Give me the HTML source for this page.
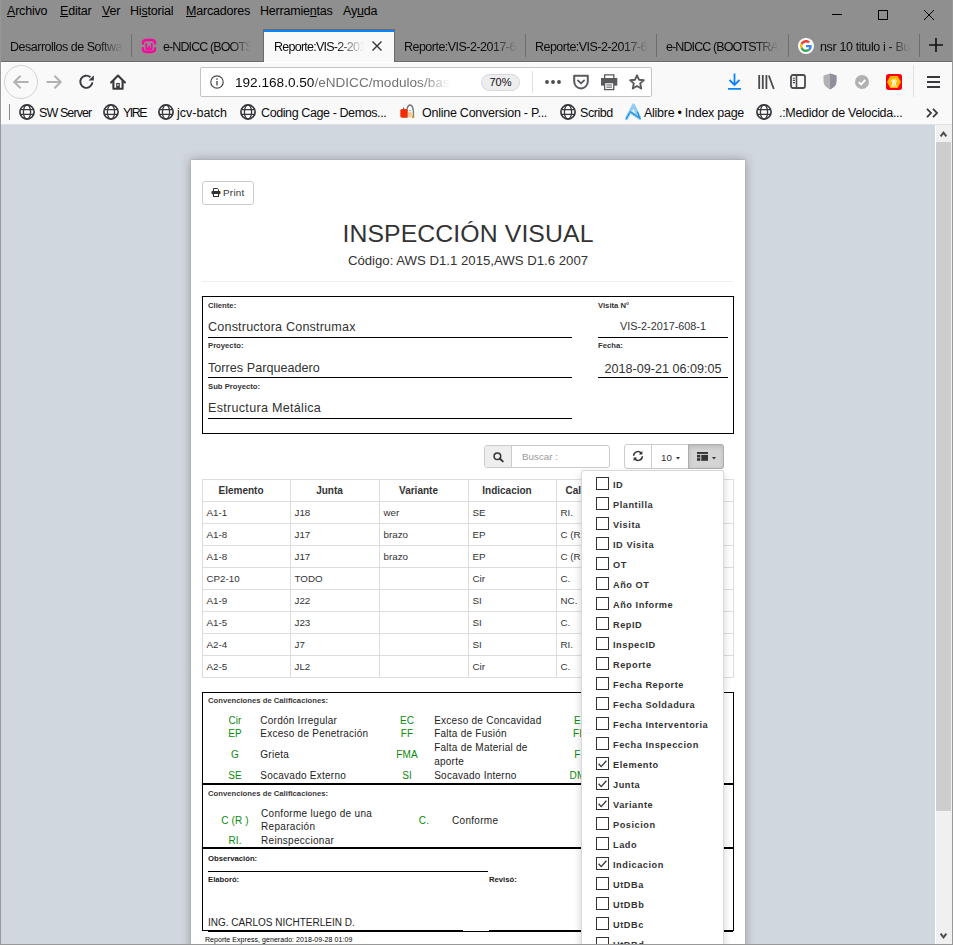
<!DOCTYPE html>
<html><head><meta charset="utf-8">
<style>
*{margin:0;padding:0;box-sizing:border-box}
html,body{width:953px;height:945px;overflow:hidden;background:#8f8f8f;font-family:"Liberation Sans",sans-serif}
.a{position:absolute;white-space:nowrap}
.mb{position:absolute;top:4px;font-size:12.5px;letter-spacing:-0.2px;color:#000;white-space:nowrap}
.mb u{text-decoration:underline;text-underline-offset:1px}
.tt{position:absolute;top:39.5px;font-size:12.5px;letter-spacing:-0.6px;color:#0c0c0d;white-space:nowrap;overflow:hidden;-webkit-mask-image:linear-gradient(to right,#000 78%,transparent 100%)}
.sep{position:absolute;top:34px;width:1px;height:23px;background:#6e6e6e}
.bm{position:absolute;top:106px;font-size:12.5px;color:#0c0c0d;white-space:nowrap}
.gl{position:absolute;top:104px;width:16px;height:16px}
svg{position:absolute;overflow:visible}
</style></head><body>
<!-- window border -->
<div class="a" style="left:0;top:0;width:953px;height:945px;background:#8f8f8f"></div>
<!-- menubar -->
<div class="mb" style="left:7px"><u>A</u>rchivo</div>
<div class="mb" style="left:60px"><u>E</u>ditar</div>
<div class="mb" style="left:102px"><u>V</u>er</div>
<div class="mb" style="left:130px">Hi<u>s</u>torial</div>
<div class="mb" style="left:186px"><u>M</u>arcadores</div>
<div class="mb" style="left:260px">Herramie<u>n</u>tas</div>
<div class="mb" style="left:343px">Ay<u>u</u>da</div>
<!-- window controls -->
<div class="a" style="left:832px;top:14px;width:10px;height:1px;background:#000"></div>
<div class="a" style="left:878px;top:10px;width:10px;height:10px;border:1px solid #000"></div>
<svg style="left:924px;top:10px" width="10" height="10"><path d="M0 0L10 10M10 0L0 10" stroke="#000" stroke-width="1"/></svg>
<!-- tabs -->
<div class="a" style="left:1px;top:61px;width:951px;height:1px;background:#6a6a6a"></div>
<div class="tt" style="left:10px;width:113px;letter-spacing:-0.49px">Desarrollos de Software</div>
<div class="sep" style="left:131px"></div>
<svg style="left:141px;top:38px" width="16" height="16" viewBox="0 0 16 16"><path d="M1.9 6.6V5.5Q1.9 2 5.4 2H10.6Q14.1 2 14.1 5.5V6.6M1.9 9.2V10.5Q1.9 14 5.4 14H10.6Q14.1 14 14.1 10.5V9.2" fill="none" stroke="#f7099c" stroke-width="2.3"/><path d="M5.3 5.2V9.6Q5.3 11.5 6.8 11.5Q8 11.5 8 9.8V8.3M8 9.8Q8 11.5 9.2 11.5Q10.7 11.5 10.7 9.6V5.2" fill="none" stroke="#f7099c" stroke-width="1.9"/></svg>
<div class="tt" style="left:163px;width:88px;letter-spacing:-0.89px">e-NDICC (BOOTSTRAP)</div>
<!-- active tab -->
<div class="a" style="left:263px;top:29px;width:132px;height:33px;background:#6a6a6a"></div>
<div class="a" style="left:264px;top:30px;width:130px;height:32px;background:#f9f9fa"></div>
<div class="a" style="left:264px;top:30px;width:130px;height:2px;background:#0a84ff"></div>
<div class="tt" style="left:274px;width:90px;letter-spacing:-0.75px;-webkit-mask-image:linear-gradient(to right,#000 70%,transparent 100%)">Reporte:VIS-2-2017-608-1</div>
<svg style="left:372px;top:41px" width="10" height="10"><path d="M0.5 0.5L9.5 9.5M9.5 0.5L0.5 9.5" stroke="#333" stroke-width="1.4"/></svg>
<div class="tt" style="left:404px;width:113px;letter-spacing:-0.52px">Reporte:VIS-2-2017-608-1</div>
<div class="sep" style="left:525px"></div>
<div class="tt" style="left:535px;width:113px;letter-spacing:-0.52px">Reporte:VIS-2-2017-608-1</div>
<div class="sep" style="left:656px"></div>
<div class="tt" style="left:666px;width:113px;letter-spacing:-0.89px">e-NDICC (BOOTSTRAP)</div>
<div class="sep" style="left:788px"></div>
<svg style="left:798px;top:38px" width="16" height="16" viewBox="0 0 16 16"><circle cx="8" cy="8" r="8" fill="#fff"/><g transform="translate(2,2) scale(0.25)"><path fill="#EA4335" d="M24 9.5c3.54 0 6.71 1.22 9.21 3.6l6.85-6.85C35.9 2.38 30.47 0 24 0 14.62 0 6.51 5.38 2.56 13.22l7.98 6.19C12.43 13.72 17.74 9.5 24 9.5z"/><path fill="#4285F4" d="M46.98 24.55c0-1.570-.15-3.09-.38-4.55H24v9.02h12.94c-.58 2.96-2.26 5.48-4.78 7.18l7.730 6c4.51-4.18 7.09-10.36 7.09-17.65z"/><path fill="#FBBC05" d="M10.53 28.59c-.48-1.45-.76-2.99-.76-4.59s.27-3.14.76-4.59l-7.98-6.19C.92 16.46 0 20.12 0 24c0 3.88.92 7.54 2.56 10.78l7.97-6.19z"/><path fill="#34A853" d="M24 48c6.48 0 11.93-2.13 15.89-5.81l-7.73-6c-2.15 1.45-4.92 2.3-8.16 2.3-6.26 0-11.57-4.22-13.47-9.91l-7.98 6.19C6.51 42.62 14.62 48 24 48z"/></g></svg>
<div class="tt" style="left:820px;width:90px;letter-spacing:-0.36px">nsr 10 titulo i - Buscar con Google</div>
<div class="sep" style="left:919px"></div>
<svg style="left:929px;top:38px" width="14" height="14"><path d="M7 0V14M0 7H14" stroke="#111" stroke-width="1.6"/></svg>
<!-- toolbar -->
<div class="a" style="left:1px;top:62px;width:951px;height:63px;background:#f9f9fa"></div>
<div class="a" style="left:1px;top:124px;width:951px;height:1px;background:#e1e1e2"></div>
<div class="a" style="left:1px;top:62px;width:951px;height:1px;background:#fff"></div>
<div class="a" style="left:1px;top:62px;width:1px;height:62px;background:#fff"></div>
<!-- nav buttons -->
<div class="a" style="left:4px;top:65px;width:34px;height:34px;border-radius:50%;border:1px solid #d3d3d5;background:#f9f9fa"></div>
<svg style="left:13px;top:75px" width="16" height="14" viewBox="0 0 16 14"><path d="M1.2 7H15.5M7.6 0.7L1.3 7L7.6 13.3" fill="none" stroke="#b1b1b3" stroke-width="2"/></svg>
<svg style="left:46px;top:75px" width="16" height="14" viewBox="0 0 16 14"><path d="M0.5 7H14.8M8.4 0.7L14.7 7L8.4 13.3" fill="none" stroke="#b1b1b3" stroke-width="2"/></svg>
<svg style="left:79px;top:74px" width="16" height="15" viewBox="0 0 16 15"><path d="M13.4 8.3A6.1 6.1 0 1 1 11.4 3.2" fill="none" stroke="#38383d" stroke-width="1.9"/><path d="M14.8 1.2V6.4H9.6Z" fill="#38383d"/></svg>
<svg style="left:110px;top:74px" width="16" height="16" viewBox="0 0 16 16"><path d="M1.1 8.4L8 1.6L14.9 8.4" fill="none" stroke="#38383d" stroke-width="2.1" stroke-linecap="round" stroke-linejoin="round"/><path d="M3.4 6.8V14.8H12.6V6.8" fill="none" stroke="#38383d" stroke-width="2.1" stroke-linejoin="round"/><rect x="6.2" y="9" width="3.6" height="6" fill="#38383d"/><rect x="7.3" y="10.2" width="1.4" height="1.6" fill="#f9f9fa"/></svg>
<!-- url bar -->
<div class="a" style="left:200px;top:67px;width:452px;height:30px;border:1px solid #c4c4c6;border-radius:2px;background:#fff"></div>
<svg style="left:210px;top:75px" width="14" height="14" viewBox="0 0 14 14"><circle cx="7" cy="7" r="6.2" fill="none" stroke="#4a4a4f" stroke-width="1.2"/><rect x="6.3" y="6" width="1.4" height="4.5" fill="#4a4a4f"/><rect x="6.3" y="3.3" width="1.4" height="1.5" fill="#4a4a4f"/></svg>
<div class="a" style="left:235px;top:75px;font-size:13.6px;color:#0c0c0d;width:216px;overflow:hidden;-webkit-mask-image:linear-gradient(to right,#000 86%,transparent 100%)">192.168.0.50<span style="color:#737373">/eNDICC/modulos/basicos/reporte</span></div>
<div class="a" style="left:481px;top:74px;width:39px;height:17px;border:1px solid #d7d7db;border-radius:9px;background:#ededf0;font-size:11px;color:#0c0c0d;text-align:center;line-height:15px">70%</div>
<div class="a" style="left:532px;top:71px;width:1px;height:22px;background:#e1e1e2"></div>
<svg style="left:545px;top:79px" width="16" height="6"><circle cx="2" cy="3" r="1.9" fill="#4a4a4f"/><circle cx="8" cy="3" r="1.9" fill="#4a4a4f"/><circle cx="14" cy="3" r="1.9" fill="#4a4a4f"/></svg>
<svg style="left:573px;top:74px" width="16" height="16" viewBox="0 0 16 16"><path d="M1.2 1.8H14.8V7.6A6.8 6.8 0 0 1 1.2 7.6Z" fill="none" stroke="#5a5a5e" stroke-width="2" stroke-linejoin="round"/><path d="M4.9 6.4L8 9.4L11.1 6.4" fill="none" stroke="#5a5a5e" stroke-width="1.9" stroke-linecap="round" stroke-linejoin="round"/></svg>
<svg style="left:601px;top:74px" width="17" height="16" viewBox="0 0 17 16"><path d="M3.6 4.5V0.8H12.8V4.5" fill="none" stroke="#5a5a5e" stroke-width="1.3"/><rect x="0" y="4" width="16.3" height="7.6" fill="#5a5a5e"/><rect x="3.6" y="8.6" width="9.2" height="7" fill="#fff" stroke="#5a5a5e" stroke-width="1.3"/><path d="M5.4 11H11M5.4 13.2H11" stroke="#5a5a5e" stroke-width="1"/></svg>
<svg style="left:629px;top:74px" width="16" height="16" viewBox="0 0 16 16"><path d="M8 1.3L10 5.7L14.8 6.2L11.2 9.4L12.2 14.5L8 12L3.8 14.5L4.8 9.4L1.2 6.2L6 5.7Z" fill="none" stroke="#5a5a5e" stroke-width="1.9" stroke-linejoin="round"/></svg>
<!-- right toolbar icons -->
<svg style="left:728px;top:73px" width="13" height="17" viewBox="0 0 13 17"><path d="M6.5 0.5V12M1.5 7L6.5 12L11.5 7M0 15.8H13" fill="none" stroke="#0a84ff" stroke-width="1.8"/></svg>
<svg style="left:758px;top:74px" width="17" height="16" viewBox="0 0 17 16"><path d="M1.2 1V15M4.8 1V15M8.4 1V15M10.8 1.5L15.8 15" fill="none" stroke="#4a4a4f" stroke-width="1.8"/></svg>
<svg style="left:790px;top:74px" width="16" height="15" viewBox="0 0 16 15"><rect x="1" y="1" width="14" height="13" rx="2" fill="none" stroke="#4a4a4f" stroke-width="1.8"/><path d="M6.5 1.5V13.5" stroke="#4a4a4f" stroke-width="1.6"/><path d="M2.8 4.2H5M2.8 6.4H5M2.8 8.6H5" stroke="#4a4a4f" stroke-width="1.1"/></svg>
<svg style="left:823px;top:73px" width="14" height="17" viewBox="0 0 14 17"><path d="M7 0.5L13.5 2.5V8Q13.5 13.5 7 16.5Q0.5 13.5 0.5 8V2.5Z" fill="#b1b1b3"/><path d="M7 0.5L13.5 2.5V8Q13.5 13.5 7 16.5Z" fill="#8f8f9d"/></svg>
<svg style="left:855px;top:75px" width="14" height="14" viewBox="0 0 14 14"><circle cx="7" cy="7" r="7" fill="#b1b1b3"/><path d="M3.8 7.2L6 9.4L10.3 5" fill="none" stroke="#fff" stroke-width="1.8"/></svg>
<svg style="left:886px;top:74px" width="16" height="16" viewBox="0 0 16 16"><rect x="0" y="0" width="16" height="16" rx="2.5" fill="#ff0012"/><path d="M4.3 2H11.7L15 8L11.7 14H4.3L1 8Z" fill="#ffb800"/><path d="M5.8 13L7.2 6.8Q8 5 8.8 6.8L10.2 13M8 6.5V13M5 7.8L6.6 5.5M11 7.8L9.4 5.5" fill="none" stroke="#fff6d8" stroke-width="1.1"/></svg>
<div class="a" style="left:913px;top:65px;width:1px;height:32px;background:#e1e1e2"></div>
<svg style="left:927px;top:76px" width="13" height="12"><path d="M0 1H13M0 6H13M0 11H13" stroke="#38383d" stroke-width="1.8"/></svg>
<!-- bookmarks bar -->
<div class="a" style="left:9px;top:104px;width:1px;height:16px;background:#8a8a8e"></div>
<svg width="0" height="0"><defs><g id="globe"><circle cx="8" cy="8" r="7.1" fill="none" stroke="#38383d" stroke-width="1.7"/><ellipse cx="8" cy="8" rx="3.6" ry="7.1" fill="none" stroke="#38383d" stroke-width="1.3"/><path d="M1.3 5.6H14.7M1.3 10.4H14.7" stroke="#38383d" stroke-width="1.4"/></g></defs></svg>
<svg style="left:19px;top:104px" width="16" height="16"><use href="#globe"/></svg>
<div class="bm" style="left:39px;letter-spacing:-0.9px">SW Server</div>
<svg style="left:103px;top:104px" width="16" height="16"><use href="#globe"/></svg>
<div class="bm" style="left:123px;letter-spacing:-1.5px">YIRE</div>
<svg style="left:158px;top:104px" width="16" height="16"><use href="#globe"/></svg>
<div class="bm" style="left:177px">jcv-batch</div>
<svg style="left:240px;top:104px" width="16" height="16"><use href="#globe"/></svg>
<div class="bm" style="left:261px;letter-spacing:-0.4px">Coding Cage - Demos...</div>
<svg style="left:400px;top:104px" width="16" height="16" viewBox="0 0 16 16"><rect width="16" height="16" fill="#fff"/><path d="M6.8 14Q6 1.2 10 1Q14 1.2 13.4 13" fill="none" stroke="#7a7a7a" stroke-width="1.5"/><ellipse cx="9.8" cy="10.5" rx="2.2" ry="3" fill="#fcc690"/><path d="M9 6.5H11" stroke="#9c9" stroke-width="1"/><path d="M12.3 11.5L14.8 13.8L12 14.2Z" fill="#d49a00"/><path d="M0.3 6.5Q0.3 5 2 5H5.8Q7.6 5 7.6 6.5V12Q7.6 13.8 5.8 13.8H2Q0.3 13.8 0.3 12Z" fill="#f52a00"/><path d="M3.6 5V3.5" stroke="#2b5a2b" stroke-width="1"/></svg>
<div class="bm" style="left:422px;letter-spacing:-0.25px">Online Conversion - P...</div>
<svg style="left:560px;top:104px" width="16" height="16"><use href="#globe"/></svg>
<div class="bm" style="left:580px;letter-spacing:-0.45px">Scribd</div>
<svg style="left:625px;top:104px" width="16" height="16" viewBox="0 0 16 16"><path d="M8.5 1.2L1.5 14.6M8.5 1.2L14.8 14.2M5.2 7.8L14.8 14.2" fill="none" stroke="#8fcdf5" stroke-width="3.2" stroke-linecap="round" stroke-linejoin="round"/><path d="M1.5 14.6L4.5 9M5.2 7.8L14.8 14.2L12.5 8" fill="none" stroke="#1a8ad8" stroke-width="1.1" stroke-linecap="round"/></svg>
<div class="bm" style="left:644px;letter-spacing:-0.27px">Alibre • Index page</div>
<svg style="left:756px;top:104px" width="16" height="16"><use href="#globe"/></svg>
<div class="bm" style="left:779px;letter-spacing:-0.3px">.:Medidor de Velocida...</div>
<svg style="left:926px;top:108px" width="13" height="10" viewBox="0 0 13 10"><path d="M1 0.8L5 5L1 9.2M7 0.8L11 5L7 9.2" fill="none" stroke="#38383d" stroke-width="1.8"/></svg>
<div class="a" style="left:0;top:0;width:953px;height:945px;clip-path:inset(125px 18px 1px 1px)">
<div class="a" style="left:1px;top:125px;width:934px;height:819px;background:#d1d7de;"></div>
<div class="a" style="left:191px;top:160px;width:554px;height:800px;background:#fff;box-shadow:0 0 1.5px rgba(0,0,0,.16),0 0 9px 1px rgba(40,50,50,.3)"></div>
<div class="a" style="left:202px;top:181px;width:52px;height:24px;border:1px solid #ccc;border-radius:3px;background:#fff"></div>
<svg style="left:211px;top:188px" width="10" height="9" viewBox="0 0 10 9"><path d="M2.5 3V0.5H6.5L7.5 1.5V3" fill="none" stroke="#333" stroke-width="1"/><rect x="0.5" y="3" width="9" height="3.2" rx="0.8" fill="#333"/><rect x="2.5" y="5.5" width="5" height="3" fill="#fff" stroke="#333" stroke-width="1"/></svg>
<div class="a" style="left:223px;top:187.80px;font-size:9.8px;line-height:9.8px;color:#333;letter-spacing:0.3px;">Print</div>
<div class="a" style="left:191px;top:221.71px;font-size:24.8px;line-height:24.8px;color:#333;letter-spacing:0.1px;width:554px;text-align:center;">INSPECCIÓN VISUAL</div>
<div class="a" style="left:191px;top:254.13px;font-size:13.2px;line-height:13.2px;color:#333;width:554px;text-align:center;">Código: AWS D1.1 2015,AWS D1.6 2007</div>
<div class="a" style="left:202px;top:281px;width:531px;height:1px;background:#eee;"></div>
<div class="a" style="left:202px;top:296px;width:532px;height:138px;border:1.4px solid #000"></div>
<div class="a" style="left:208px;top:301.78px;font-size:7.7px;line-height:7.7px;color:#333;font-weight:700;">Cliente:</div>
<div class="a" style="left:208px;top:321.33px;font-size:12.6px;line-height:12.6px;color:#333;letter-spacing:0.18px;">Constructora Construmax</div>
<div class="a" style="left:208px;top:337px;width:364px;height:1.4px;background:#000;"></div>
<div class="a" style="left:208px;top:342.08px;font-size:7.7px;line-height:7.7px;color:#333;font-weight:700;">Proyecto:</div>
<div class="a" style="left:208px;top:362.13px;font-size:12.6px;line-height:12.6px;color:#333;letter-spacing:0.03px;">Torres Parqueadero</div>
<div class="a" style="left:208px;top:377px;width:364px;height:1.4px;background:#000;"></div>
<div class="a" style="left:208px;top:382.58px;font-size:7.7px;line-height:7.7px;color:#333;font-weight:700;">Sub Proyecto:</div>
<div class="a" style="left:208px;top:402.43px;font-size:12.6px;line-height:12.6px;color:#333;letter-spacing:0.28px;">Estructura Metálica</div>
<div class="a" style="left:208px;top:418px;width:364px;height:1.4px;background:#000;"></div>
<div class="a" style="left:598px;top:301.88px;font-size:7.7px;line-height:7.7px;color:#333;font-weight:700;">Visita N°</div>
<div class="a" style="left:598px;top:321.46px;font-size:10.8px;line-height:10.8px;color:#333;width:130px;text-align:center;">VIS-2-2017-608-1</div>
<div class="a" style="left:598px;top:337px;width:130px;height:1.4px;background:#000;"></div>
<div class="a" style="left:598px;top:341.98px;font-size:7.7px;line-height:7.7px;color:#333;font-weight:700;">Fecha:</div>
<div class="a" style="left:598px;top:362.93px;font-size:12.6px;line-height:12.6px;color:#333;width:130px;text-align:center;">2018-09-21 06:09:05</div>
<div class="a" style="left:598px;top:377px;width:130px;height:1.4px;background:#000;"></div>
<div class="a" style="left:484px;top:445px;width:126px;height:23px;border:1px solid #ccc;border-radius:3px;background:#fff"></div>
<div class="a" style="left:485px;top:446px;width:27px;height:21px;background:#eee;border-right:1px solid #ccc;border-radius:2px 0 0 2px"></div>
<svg style="left:493px;top:452px" width="11" height="10" viewBox="0 0 11 10"><circle cx="4.4" cy="4.2" r="3.3" fill="none" stroke="#333" stroke-width="1.5"/><path d="M6.7 6.5L9.8 9.4" stroke="#333" stroke-width="1.9" stroke-linecap="round"/></svg>
<div class="a" style="left:522px;top:452.30px;font-size:9.8px;line-height:9.8px;color:#999;">Buscar :</div>
<div class="a" style="left:624px;top:444px;width:100px;height:25px;border:1px solid #ccc;border-radius:3px;background:#fff"></div>
<div class="a" style="left:688px;top:444px;width:36px;height:25px;border:1px solid #adadad;border-radius:0 3px 3px 0;background:#d4d4d4;box-shadow:inset 0 2px 4px rgba(0,0,0,.125)"></div>
<div class="a" style="left:651px;top:445px;width:1px;height:23px;background:#ccc;"></div>
<svg style="left:632px;top:450px" width="12" height="12" viewBox="0 0 12 12"><path d="M1.6 5.8A4.3 4.3 0 0 1 9.2 3.2" fill="none" stroke="#333" stroke-width="1.5"/><path d="M10.4 1V4.6H6.8Z" fill="#333"/><path d="M10.4 6.2A4.3 4.3 0 0 1 2.8 8.8" fill="none" stroke="#333" stroke-width="1.5"/><path d="M1.6 11V7.4H5.2Z" fill="#333"/></svg>
<div class="a" style="left:661px;top:452.80px;font-size:9.8px;line-height:9.8px;color:#333;">10</div>
<svg style="left:676px;top:457px" width="4" height="3"><path d="M0 0H4L2 2.5Z" fill="#333"/></svg>
<svg style="left:697px;top:452px" width="12" height="10" viewBox="0 0 12 10"><rect x="0" y="0" width="11" height="1.9" fill="#333"/><rect x="0" y="2.9" width="3.3" height="2.6" fill="#333"/><rect x="0" y="6.2" width="3.3" height="2.6" fill="#333"/><rect x="4.3" y="2.9" width="6.7" height="5.9" fill="#333"/></svg>
<svg style="left:712px;top:457px" width="4" height="3"><path d="M0 0H4L2 2.5Z" fill="#333"/></svg>
<div class="a" style="left:202px;top:479px;width:532px;height:199px;background:#fff;border:1px solid #ddd"></div>
<div class="a" style="left:290px;top:479px;width:1px;height:199px;background:#ddd;"></div>
<div class="a" style="left:379px;top:479px;width:1px;height:199px;background:#ddd;"></div>
<div class="a" style="left:468px;top:479px;width:1px;height:199px;background:#ddd;"></div>
<div class="a" style="left:556px;top:479px;width:1px;height:199px;background:#ddd;"></div>
<div class="a" style="left:645px;top:479px;width:1px;height:199px;background:#ddd;"></div>
<div class="a" style="left:202px;top:501px;width:532px;height:1px;background:#ddd;"></div>
<div class="a" style="left:202px;top:523px;width:532px;height:1px;background:#ddd;"></div>
<div class="a" style="left:202px;top:545px;width:532px;height:1px;background:#ddd;"></div>
<div class="a" style="left:202px;top:567px;width:532px;height:1px;background:#ddd;"></div>
<div class="a" style="left:202px;top:589px;width:532px;height:1px;background:#ddd;"></div>
<div class="a" style="left:202px;top:611px;width:532px;height:1px;background:#ddd;"></div>
<div class="a" style="left:202px;top:633px;width:532px;height:1px;background:#ddd;"></div>
<div class="a" style="left:202px;top:655px;width:532px;height:1px;background:#ddd;"></div>
<div class="a" style="left:197px;top:486.14px;font-size:10px;line-height:10px;color:#333;font-weight:700;width:88px;text-align:center;">Elemento</div>
<div class="a" style="left:285px;top:486.14px;font-size:10px;line-height:10px;color:#333;font-weight:700;width:89px;text-align:center;">Junta</div>
<div class="a" style="left:374px;top:486.14px;font-size:10px;line-height:10px;color:#333;font-weight:700;width:89px;text-align:center;">Variante</div>
<div class="a" style="left:463px;top:486.14px;font-size:10px;line-height:10px;color:#333;font-weight:700;width:88px;text-align:center;">Indicacion</div>
<div class="a" style="left:549px;top:486.14px;font-size:10px;line-height:10px;color:#333;font-weight:700;width:89px;text-align:center;">Calificacion</div>
<div class="a" style="left:640px;top:486.14px;font-size:10px;line-height:10px;color:#333;font-weight:700;width:88px;text-align:center;">Descripcion</div>
<div class="a" style="left:206.5px;top:508.30px;font-size:9.8px;line-height:9.8px;color:#333;">A1-1</div>
<div class="a" style="left:294.5px;top:508.30px;font-size:9.8px;line-height:9.8px;color:#333;">J18</div>
<div class="a" style="left:383.5px;top:508.30px;font-size:9.8px;line-height:9.8px;color:#333;">wer</div>
<div class="a" style="left:472.5px;top:508.30px;font-size:9.8px;line-height:9.8px;color:#333;">SE</div>
<div class="a" style="left:560.5px;top:508.30px;font-size:9.8px;line-height:9.8px;color:#333;">RI.</div>
<div class="a" style="left:206.5px;top:530.30px;font-size:9.8px;line-height:9.8px;color:#333;">A1-8</div>
<div class="a" style="left:294.5px;top:530.30px;font-size:9.8px;line-height:9.8px;color:#333;">J17</div>
<div class="a" style="left:383.5px;top:530.30px;font-size:9.8px;line-height:9.8px;color:#333;">brazo</div>
<div class="a" style="left:472.5px;top:530.30px;font-size:9.8px;line-height:9.8px;color:#333;">EP</div>
<div class="a" style="left:560.5px;top:530.30px;font-size:9.8px;line-height:9.8px;color:#333;">C (R )</div>
<div class="a" style="left:206.5px;top:552.30px;font-size:9.8px;line-height:9.8px;color:#333;">A1-8</div>
<div class="a" style="left:294.5px;top:552.30px;font-size:9.8px;line-height:9.8px;color:#333;">J17</div>
<div class="a" style="left:383.5px;top:552.30px;font-size:9.8px;line-height:9.8px;color:#333;">brazo</div>
<div class="a" style="left:472.5px;top:552.30px;font-size:9.8px;line-height:9.8px;color:#333;">EP</div>
<div class="a" style="left:560.5px;top:552.30px;font-size:9.8px;line-height:9.8px;color:#333;">C (R )</div>
<div class="a" style="left:206.5px;top:574.30px;font-size:9.8px;line-height:9.8px;color:#333;">CP2-10</div>
<div class="a" style="left:294.5px;top:574.30px;font-size:9.8px;line-height:9.8px;color:#333;">TODO</div>
<div class="a" style="left:472.5px;top:574.30px;font-size:9.8px;line-height:9.8px;color:#333;">Cir</div>
<div class="a" style="left:560.5px;top:574.30px;font-size:9.8px;line-height:9.8px;color:#333;">C.</div>
<div class="a" style="left:206.5px;top:596.30px;font-size:9.8px;line-height:9.8px;color:#333;">A1-9</div>
<div class="a" style="left:294.5px;top:596.30px;font-size:9.8px;line-height:9.8px;color:#333;">J22</div>
<div class="a" style="left:472.5px;top:596.30px;font-size:9.8px;line-height:9.8px;color:#333;">SI</div>
<div class="a" style="left:560.5px;top:596.30px;font-size:9.8px;line-height:9.8px;color:#333;">NC.</div>
<div class="a" style="left:206.5px;top:618.30px;font-size:9.8px;line-height:9.8px;color:#333;">A1-5</div>
<div class="a" style="left:294.5px;top:618.30px;font-size:9.8px;line-height:9.8px;color:#333;">J23</div>
<div class="a" style="left:472.5px;top:618.30px;font-size:9.8px;line-height:9.8px;color:#333;">SI</div>
<div class="a" style="left:560.5px;top:618.30px;font-size:9.8px;line-height:9.8px;color:#333;">C.</div>
<div class="a" style="left:206.5px;top:640.30px;font-size:9.8px;line-height:9.8px;color:#333;">A2-4</div>
<div class="a" style="left:294.5px;top:640.30px;font-size:9.8px;line-height:9.8px;color:#333;">J7</div>
<div class="a" style="left:472.5px;top:640.30px;font-size:9.8px;line-height:9.8px;color:#333;">SI</div>
<div class="a" style="left:560.5px;top:640.30px;font-size:9.8px;line-height:9.8px;color:#333;">RI.</div>
<div class="a" style="left:206.5px;top:662.30px;font-size:9.8px;line-height:9.8px;color:#333;">A2-5</div>
<div class="a" style="left:294.5px;top:662.30px;font-size:9.8px;line-height:9.8px;color:#333;">JL2</div>
<div class="a" style="left:472.5px;top:662.30px;font-size:9.8px;line-height:9.8px;color:#333;">Cir</div>
<div class="a" style="left:560.5px;top:662.30px;font-size:9.8px;line-height:9.8px;color:#333;">C.</div>
<div class="a" style="left:202px;top:692px;width:532px;height:239px;border:1.4px solid #000"></div>
<div class="a" style="left:202px;top:783px;width:532px;height:2.2px;background:#000;"></div>
<div class="a" style="left:202px;top:846.5px;width:532px;height:2.2px;background:#000;"></div>
<div class="a" style="left:208px;top:696.98px;font-size:7.7px;line-height:7.7px;color:#3a3a3a;font-weight:700;">Convenciones de Calificaciones:</div>
<div class="a" style="left:212px;top:715.74px;font-size:10px;line-height:10px;color:#0a8a0a;letter-spacing:0.15px;width:46px;text-align:center;">Cir</div>
<div class="a" style="left:260.3px;top:715.74px;font-size:10px;line-height:10px;color:#222;letter-spacing:0.25px;">Cordón Irregular</div>
<div class="a" style="left:383px;top:715.74px;font-size:10px;line-height:10px;color:#0a8a0a;letter-spacing:0.15px;width:48px;text-align:center;">EC</div>
<div class="a" style="left:434.2px;top:715.74px;font-size:10px;line-height:10px;color:#222;letter-spacing:0.25px;">Exceso de Concavidad</div>
<div class="a" style="left:553.5px;top:715.74px;font-size:10px;line-height:10px;color:#0a8a0a;letter-spacing:0.15px;width:48px;text-align:center;">E</div>
<div class="a" style="left:212px;top:729.43px;font-size:10px;line-height:10px;color:#0a8a0a;letter-spacing:0.15px;width:46px;text-align:center;">EP</div>
<div class="a" style="left:260.3px;top:729.43px;font-size:10px;line-height:10px;color:#222;letter-spacing:0.25px;">Exceso de Penetración</div>
<div class="a" style="left:383px;top:729.43px;font-size:10px;line-height:10px;color:#0a8a0a;letter-spacing:0.15px;width:48px;text-align:center;">FF</div>
<div class="a" style="left:434.2px;top:729.43px;font-size:10px;line-height:10px;color:#222;letter-spacing:0.25px;">Falta de Fusión</div>
<div class="a" style="left:553.5px;top:729.43px;font-size:10px;line-height:10px;color:#0a8a0a;letter-spacing:0.15px;width:48px;text-align:center;">FI</div>
<div class="a" style="left:212px;top:750.34px;font-size:10px;line-height:10px;color:#0a8a0a;letter-spacing:0.15px;width:46px;text-align:center;">G</div>
<div class="a" style="left:260.3px;top:750.34px;font-size:10px;line-height:10px;color:#222;letter-spacing:0.25px;">Grieta</div>
<div class="a" style="left:383px;top:750.34px;font-size:10px;line-height:10px;color:#0a8a0a;letter-spacing:0.15px;width:48px;text-align:center;">FMA</div>
<div class="a" style="left:434.2px;top:742.74px;font-size:10px;line-height:10px;color:#222;letter-spacing:0.25px;">Falta de Material de</div>
<div class="a" style="left:434.2px;top:757.03px;font-size:10px;line-height:10px;color:#222;letter-spacing:0.25px;">aporte</div>
<div class="a" style="left:553.5px;top:750.34px;font-size:10px;line-height:10px;color:#0a8a0a;letter-spacing:0.15px;width:48px;text-align:center;">F</div>
<div class="a" style="left:212px;top:770.74px;font-size:10px;line-height:10px;color:#0a8a0a;letter-spacing:0.15px;width:46px;text-align:center;">SE</div>
<div class="a" style="left:260.3px;top:770.74px;font-size:10px;line-height:10px;color:#222;letter-spacing:0.25px;">Socavado Externo</div>
<div class="a" style="left:383px;top:770.74px;font-size:10px;line-height:10px;color:#0a8a0a;letter-spacing:0.15px;width:48px;text-align:center;">SI</div>
<div class="a" style="left:434.2px;top:770.74px;font-size:10px;line-height:10px;color:#222;letter-spacing:0.25px;">Socavado Interno</div>
<div class="a" style="left:553.5px;top:770.74px;font-size:10px;line-height:10px;color:#0a8a0a;letter-spacing:0.15px;width:48px;text-align:center;">DM</div>
<div class="a" style="left:208px;top:789.78px;font-size:7.7px;line-height:7.7px;color:#3a3a3a;font-weight:700;">Convenciones de Calificaciones:</div>
<div class="a" style="left:212px;top:815.84px;font-size:10px;line-height:10px;color:#0a8a0a;letter-spacing:0.15px;width:46px;text-align:center;">C (R )</div>
<div class="a" style="left:261px;top:808.63px;font-size:10px;line-height:10px;color:#222;letter-spacing:0.32px;">Conforme luego de una</div>
<div class="a" style="left:261px;top:822.43px;font-size:10px;line-height:10px;color:#222;letter-spacing:0.32px;">Reparación</div>
<div class="a" style="left:212px;top:836.03px;font-size:10px;line-height:10px;color:#0a8a0a;letter-spacing:0.15px;width:46px;text-align:center;">RI.</div>
<div class="a" style="left:261px;top:836.03px;font-size:10px;line-height:10px;color:#222;letter-spacing:0.3px;">Reinspeccionar</div>
<div class="a" style="left:400px;top:815.84px;font-size:10px;line-height:10px;color:#0a8a0a;letter-spacing:0.15px;width:48px;text-align:center;">C.</div>
<div class="a" style="left:452px;top:815.84px;font-size:10px;line-height:10px;color:#222;letter-spacing:0.3px;">Conforme</div>
<div class="a" style="left:208px;top:854.88px;font-size:7.7px;line-height:7.7px;color:#222;font-weight:700;">Observación:</div>
<div class="a" style="left:208px;top:870.5px;width:280px;height:1.2px;background:#000;"></div>
<div class="a" style="left:208px;top:875.88px;font-size:7.7px;line-height:7.7px;color:#222;font-weight:700;">Elaboró:</div>
<div class="a" style="left:489px;top:875.88px;font-size:7.7px;line-height:7.7px;color:#222;font-weight:700;">Revisó:</div>
<div class="a" style="left:208px;top:918.03px;font-size:10px;line-height:10px;color:#222;">ING. CARLOS NICHTERLEIN D.</div>
<div class="a" style="left:208px;top:929.6px;width:525px;height:2px;background:#000;"></div>
<div class="a" style="left:463px;top:928px;width:26px;height:3px;background:#fff;"></div>
<div class="a" style="left:205px;top:935.87px;font-size:7px;line-height:7px;color:#000;letter-spacing:0.06px;">Reporte Express, generado: 2018-09-28 01:09</div>
</div>
<div class="a" style="left:0;top:0;width:953px;height:945px;clip-path:inset(125px 18px 1px 1px)">
<div class="a" style="left:581px;top:470px;width:143px;height:520px;background:#fff;border:1px solid rgba(0,0,0,.15);border-radius:3px;box-shadow:0 4px 9px rgba(0,0,0,.18)"></div>
<div class="a" style="left:596px;top:477.0px;width:13px;height:13px;border:1px solid #333;background:#fff"></div>
<div class="a" style="left:613px;top:480.51px;font-size:9.2px;line-height:9.2px;color:#333;font-weight:700;letter-spacing:0.55px;">ID</div>
<div class="a" style="left:596px;top:497.0px;width:13px;height:13px;border:1px solid #333;background:#fff"></div>
<div class="a" style="left:613px;top:500.51px;font-size:9.2px;line-height:9.2px;color:#333;font-weight:700;letter-spacing:0.55px;">Plantilla</div>
<div class="a" style="left:596px;top:517.0px;width:13px;height:13px;border:1px solid #333;background:#fff"></div>
<div class="a" style="left:613px;top:520.51px;font-size:9.2px;line-height:9.2px;color:#333;font-weight:700;letter-spacing:0.55px;">Visita</div>
<div class="a" style="left:596px;top:537.0px;width:13px;height:13px;border:1px solid #333;background:#fff"></div>
<div class="a" style="left:613px;top:540.51px;font-size:9.2px;line-height:9.2px;color:#333;font-weight:700;letter-spacing:0.55px;">ID Visita</div>
<div class="a" style="left:596px;top:557.0px;width:13px;height:13px;border:1px solid #333;background:#fff"></div>
<div class="a" style="left:613px;top:560.51px;font-size:9.2px;line-height:9.2px;color:#333;font-weight:700;letter-spacing:0.55px;">OT</div>
<div class="a" style="left:596px;top:577.0px;width:13px;height:13px;border:1px solid #333;background:#fff"></div>
<div class="a" style="left:613px;top:580.51px;font-size:9.2px;line-height:9.2px;color:#333;font-weight:700;letter-spacing:0.55px;">Año OT</div>
<div class="a" style="left:596px;top:597.0px;width:13px;height:13px;border:1px solid #333;background:#fff"></div>
<div class="a" style="left:613px;top:600.51px;font-size:9.2px;line-height:9.2px;color:#333;font-weight:700;letter-spacing:0.55px;">Año Informe</div>
<div class="a" style="left:596px;top:617.0px;width:13px;height:13px;border:1px solid #333;background:#fff"></div>
<div class="a" style="left:613px;top:620.51px;font-size:9.2px;line-height:9.2px;color:#333;font-weight:700;letter-spacing:0.55px;">RepID</div>
<div class="a" style="left:596px;top:637.0px;width:13px;height:13px;border:1px solid #333;background:#fff"></div>
<div class="a" style="left:613px;top:640.51px;font-size:9.2px;line-height:9.2px;color:#333;font-weight:700;letter-spacing:0.55px;">InspecID</div>
<div class="a" style="left:596px;top:657.0px;width:13px;height:13px;border:1px solid #333;background:#fff"></div>
<div class="a" style="left:613px;top:660.51px;font-size:9.2px;line-height:9.2px;color:#333;font-weight:700;letter-spacing:0.55px;">Reporte</div>
<div class="a" style="left:596px;top:677.0px;width:13px;height:13px;border:1px solid #333;background:#fff"></div>
<div class="a" style="left:613px;top:680.51px;font-size:9.2px;line-height:9.2px;color:#333;font-weight:700;letter-spacing:0.55px;">Fecha Reporte</div>
<div class="a" style="left:596px;top:697.0px;width:13px;height:13px;border:1px solid #333;background:#fff"></div>
<div class="a" style="left:613px;top:700.51px;font-size:9.2px;line-height:9.2px;color:#333;font-weight:700;letter-spacing:0.55px;">Fecha Soldadura</div>
<div class="a" style="left:596px;top:717.0px;width:13px;height:13px;border:1px solid #333;background:#fff"></div>
<div class="a" style="left:613px;top:720.51px;font-size:9.2px;line-height:9.2px;color:#333;font-weight:700;letter-spacing:0.55px;">Fecha Interventoria</div>
<div class="a" style="left:596px;top:737.0px;width:13px;height:13px;border:1px solid #333;background:#fff"></div>
<div class="a" style="left:613px;top:740.51px;font-size:9.2px;line-height:9.2px;color:#333;font-weight:700;letter-spacing:0.55px;">Fecha Inspeccion</div>
<div class="a" style="left:596px;top:757.0px;width:13px;height:13px;border:1px solid #333;background:#fff"></div>
<svg style="left:598px;top:759.5px" width="9" height="8" viewBox="0 0 9 8"><path d="M0.6 3.8L3.2 6.6L8.4 0.8" fill="none" stroke="#333" stroke-width="1.3"/></svg>
<div class="a" style="left:613px;top:760.51px;font-size:9.2px;line-height:9.2px;color:#333;font-weight:700;letter-spacing:0.55px;">Elemento</div>
<div class="a" style="left:596px;top:777.0px;width:13px;height:13px;border:1px solid #333;background:#fff"></div>
<svg style="left:598px;top:779.5px" width="9" height="8" viewBox="0 0 9 8"><path d="M0.6 3.8L3.2 6.6L8.4 0.8" fill="none" stroke="#333" stroke-width="1.3"/></svg>
<div class="a" style="left:613px;top:780.51px;font-size:9.2px;line-height:9.2px;color:#333;font-weight:700;letter-spacing:0.55px;">Junta</div>
<div class="a" style="left:596px;top:797.0px;width:13px;height:13px;border:1px solid #333;background:#fff"></div>
<svg style="left:598px;top:799.5px" width="9" height="8" viewBox="0 0 9 8"><path d="M0.6 3.8L3.2 6.6L8.4 0.8" fill="none" stroke="#333" stroke-width="1.3"/></svg>
<div class="a" style="left:613px;top:800.51px;font-size:9.2px;line-height:9.2px;color:#333;font-weight:700;letter-spacing:0.55px;">Variante</div>
<div class="a" style="left:596px;top:817.0px;width:13px;height:13px;border:1px solid #333;background:#fff"></div>
<div class="a" style="left:613px;top:820.51px;font-size:9.2px;line-height:9.2px;color:#333;font-weight:700;letter-spacing:0.55px;">Posicion</div>
<div class="a" style="left:596px;top:837.0px;width:13px;height:13px;border:1px solid #333;background:#fff"></div>
<div class="a" style="left:613px;top:840.51px;font-size:9.2px;line-height:9.2px;color:#333;font-weight:700;letter-spacing:0.55px;">Lado</div>
<div class="a" style="left:596px;top:857.0px;width:13px;height:13px;border:1px solid #333;background:#fff"></div>
<svg style="left:598px;top:859.5px" width="9" height="8" viewBox="0 0 9 8"><path d="M0.6 3.8L3.2 6.6L8.4 0.8" fill="none" stroke="#333" stroke-width="1.3"/></svg>
<div class="a" style="left:613px;top:860.51px;font-size:9.2px;line-height:9.2px;color:#333;font-weight:700;letter-spacing:0.55px;">Indicacion</div>
<div class="a" style="left:596px;top:877.0px;width:13px;height:13px;border:1px solid #333;background:#fff"></div>
<div class="a" style="left:613px;top:880.51px;font-size:9.2px;line-height:9.2px;color:#333;font-weight:700;letter-spacing:0.55px;">UtDBa</div>
<div class="a" style="left:596px;top:897.0px;width:13px;height:13px;border:1px solid #333;background:#fff"></div>
<div class="a" style="left:613px;top:900.51px;font-size:9.2px;line-height:9.2px;color:#333;font-weight:700;letter-spacing:0.55px;">UtDBb</div>
<div class="a" style="left:596px;top:917.0px;width:13px;height:13px;border:1px solid #333;background:#fff"></div>
<div class="a" style="left:613px;top:920.51px;font-size:9.2px;line-height:9.2px;color:#333;font-weight:700;letter-spacing:0.55px;">UtDBc</div>
<div class="a" style="left:596px;top:937.0px;width:13px;height:13px;border:1px solid #333;background:#fff"></div>
<div class="a" style="left:613px;top:940.51px;font-size:9.2px;line-height:9.2px;color:#333;font-weight:700;letter-spacing:0.55px;">UtDBd</div>
</div>
<!-- scrollbar -->
<div class="a" style="left:935px;top:125px;width:1px;height:819px;background:#fff"></div>
<div class="a" style="left:936px;top:125px;width:16px;height:819px;background:#f0f0f0"></div>
<div class="a" style="left:936px;top:142px;width:15px;height:669px;background:#cdcdcd"></div>
<svg style="left:940px;top:131px" width="7" height="6" viewBox="0 0 7 6"><path d="M0.6 5.3L3.5 1.6L6.4 5.3" fill="none" stroke="#4d4d4d" stroke-width="2"/></svg>
<svg style="left:940px;top:933px" width="7" height="6" viewBox="0 0 7 6"><path d="M0.6 0.7L3.5 4.4L6.4 0.7" fill="none" stroke="#4d4d4d" stroke-width="2"/></svg>
<div class="a" style="left:0;top:0;width:1px;height:945px;background:#989898"></div>
<div class="a" style="left:952px;top:0;width:1px;height:945px;background:#989898"></div>
<div class="a" style="left:0;top:944px;width:953px;height:1px;background:#989898"></div>
</body></html>
